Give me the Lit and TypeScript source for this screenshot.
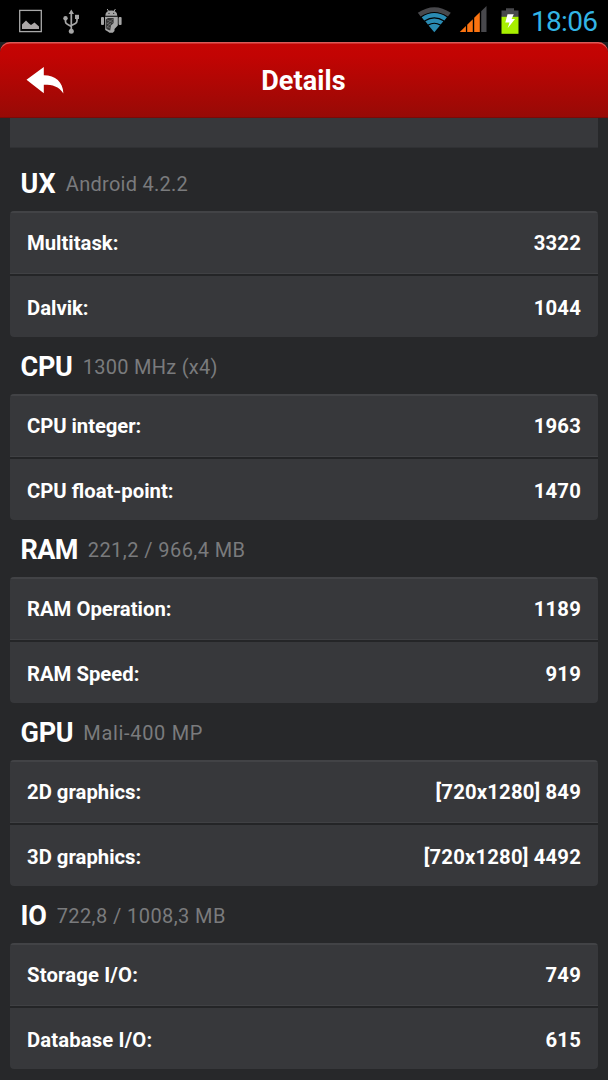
import { LitElement, html, css } from "lit";
import { customElement, property } from "lit/decorators.js";
import { styleMap } from "lit/directives/style-map.js";

interface Entry { label: string; value: string; tracking?: number }
interface Section { name: string; info: string; nameTracking: number; infoTracking: number; entries: Entry[] }

const sections: Section[] = [
  { name: "UX", info: "Android 4.2.2", nameTracking: 0.2, infoTracking: 0.27, entries: [{ label: "Multitask:", value: "3322" }, { label: "Dalvik:", value: "1044" }] },
  { name: "CPU", info: "1300 MHz (x4)", nameTracking: -0.25, infoTracking: 0.28, entries: [{ label: "CPU integer:", value: "1963", tracking: -0.06 }, { label: "CPU float-point:", value: "1470" }] },
  { name: "RAM", info: "221,2 / 966,4 MB", nameTracking: -0.6, infoTracking: 0.43, entries: [{ label: "RAM Operation:", value: "1189" }, { label: "RAM Speed:", value: "919" }] },
  { name: "GPU", info: "Mali-400 MP", nameTracking: -0.25, infoTracking: 0.67, entries: [{ label: "2D graphics:", value: "[720x1280] 849" }, { label: "3D graphics:", value: "[720x1280] 4492" }] },
  { name: "IO", info: "722,8 / 1008,3 MB", nameTracking: -0.2, infoTracking: 0.42, entries: [{ label: "Storage I/O:", value: "749", tracking: 0.15 }, { label: "Database I/O:", value: "615", tracking: 0.13 }] },
];

@customElement("status-bar")
class StatusBar extends LitElement {
  static styles = css`
    :host { display: flex; justify-content: space-between; height: 42px; background: #000; }
    svg { display: block; flex: none; }
    .right { display: flex; }
    .clock { width: 77px; font-size: 28px; line-height: 43px; color: #33b5e5; letter-spacing: -0.7px; white-space: nowrap; }
  `;
  render() {
    return html`
      <svg width="140" height="42" viewBox="0 0 140 42">
        <rect x="19.7" y="10.4" width="21.6" height="21.2" fill="none" stroke="#a9a9a9" stroke-width="1.3" />
        <path d="M22 29V24.5L26 20.5L29 23.5L31 25L34.5 22.5L39 26.5V29Z" fill="#aaa6a6" />
        <g fill="none" stroke="#a6a6a6" stroke-width="1.7">
          <path d="M71.3 12V31M65.5 18.500V21.8Q65.5 23.4 67 24L71.3 26.5M77 18V20.8Q77 22.6 75.4 23.4L71.3 25.5" />
        </g>
        <path d="M71.3 9.5L74 14H68.6Z" fill="#a6a6a6" />
        <circle cx="65.5" cy="18.3" r="2.2" fill="#a6a6a6" />
        <rect x="75" y="14.8" width="4" height="4.200" fill="#a6a6a6" />
        <circle cx="71.3" cy="31.3" r="2.5" fill="#a6a6a6" />
        <g fill="#a6a6a6">
          <path d="M105.3 15.7Q105.6 10.6 111.3 10.6Q117 10.6 117.3 15.7Z" />
          <path d="M107.2 9L108.7 11.5M115.4 9L113.9 11.5" stroke="#a6a6a6" stroke-width="1" />
          <rect x="101" y="17" width="3" height="8" rx="1" />
          <rect x="118.6" y="17" width="3" height="8" rx="1" />
          <path d="M105 16.8H117.8V25.5L114.5 29V31L112.8 32.7H109.5L107.8 31.5L105.2 30Z" />
        </g>
        <path d="M105.8 19.5L108 18H113.6V23L111 25.5L110.2 30.5L107.5 29.5L105.8 28Z" fill="#343434" />
        <path d="M107 20L113 22.500M106.5 23L111 25M106.5 26L110 28M113 19L106.500 24M111 23L106.500 28" stroke="#777" stroke-width=".7" fill="none" />
        <circle cx="109" cy="13.4" r=".6" fill="#222" /><circle cx="113.7" cy="13.4" r=".6" fill="#222" />
      </svg>
      <div class="right">
        <svg width="131" height="42" viewBox="400 0 131 42">
          <path d="M417.8 12.8Q434.3 1.5 450.8 12.8L447.9 16.6Q434.3 7.6 420.7 16.6Z" fill="#48484c" />
          <path d="M421.7 17.2Q434.3 8.8 446.9 17.2L444.4 20.4Q434.3 14 424.2 20.4Z" fill="#2a8bb3" />
          <path d="M425.3 21.3Q434.3 15.5 443.3 21.3L440.7 24.6Q434.3 20.7 427.9 24.6Z" fill="#2a8bb3" />
          <path d="M428.6 25.5Q434.3 22 440 25.5L434.3 32.2Z" fill="#2a8bb3" />
          <path d="M459.8 32L465.9 26V32ZM467.2 24.8L472.8 19.3V32H467.2ZM474.2 17.7L479.8 12.3V32H474.2Z" fill="#fb7310" />
          <path d="M481.2 11.2L486.5 6V32H481.2Z" fill="#48484c" />
          <path d="M501.5 10.5H506V8.2H514V10.5H518.5V17H501.5Z" fill="#48484c" />
          <rect x="501.5" y="16.8" width="17" height="17" fill="#a8f000" />
          <path d="M507.5 14.3H513.8L511.6 19H515L507.6 28.2L509.5 22.5H505.3Z" fill="#fff" />
        </svg>
        <div class="clock">18:06</div>
      </div>
    `;
  }
}

@customElement("title-bar")
class TitleBar extends LitElement {
  static styles = css`
    :host { display: block; height: 76px; background: #1d1f21; }
    .bar {
      box-sizing: border-box; height: 76px; border-radius: 10px 10px 0 0;
      background: linear-gradient(#c50503, #c20403 18%, #970a06);
      box-shadow: inset 0 2px 0 -0.4px #dc5a57, inset 0 -1px 0 #7c0a07;
      display: grid; grid-template-columns: 90px 1fr 90px; align-items: center;
    }
    .title { text-align: center; font-size: 27px; line-height: 32px; font-weight: 700; color: #fff; padding: 2px 1px 0 0; letter-spacing: 0.1px; }
    svg { display: block; }
  `;
  render() {
    return html`<div class="bar">
      <svg width="90" height="76" viewBox="0 42 90 76">
        <path d="M26.5 79.8L43.8 67V75.3C55.5 75.3 63 82 63.4 93.5C58.5 86.3 53 84.8 43.8 84.8V93.2Z" fill="#fff" />
      </svg>
      <div class="title">Details</div>
    </div>`;
  }
}

@customElement("detail-section")
class DetailSection extends LitElement {
  @property({ attribute: false }) section!: Section;
  static styles = css`
    :host { display: block; }
    .head { display: flex; gap: 10px; height: 57px; padding-left: 20.5px; box-sizing: border-box; white-space: nowrap; }
    .name { font-size: 27px; font-weight: 700; color: #fff; line-height: 61px; }
    .info { font-size: 20px; color: #7a7b7d; line-height: 60px; }
    .card { display: grid; grid-template-rows: 63px 61px; gap: 2px; margin: 0 10px; height: 126px; border-radius: 4px; overflow: hidden; background: #242527; }
    .row { display: flex; justify-content: space-between; padding: 0 17px; background: #37383b; color: #fff; font-size: 20.3px; font-weight: 700; line-height: 65px; white-space: nowrap; }
    .row:first-child { box-shadow: inset 0 2px 0 #424346, inset 0 -1px 0 #404144; }
    .value { letter-spacing: 0.18px; }
  `;
  render() {
    const s = this.section;
    return html`
      <div class="head">
        <span class="name" style=${styleMap({ letterSpacing: `${s.nameTracking}px` })}>${s.name}</span>
        <span class="info" style=${styleMap({ letterSpacing: `${s.infoTracking}px` })}>${s.info}</span>
      </div>
      <div class="card">
        ${s.entries.map((e) => html`<div class="row">
          <span style=${styleMap({ letterSpacing: `${e.tracking ?? 0}px` })}>${e.label}</span>
          <span class="value">${e.value}</span>
        </div>`)}
      </div>`;
  }
}

@customElement("app-root")
class AppRoot extends LitElement {
  static styles = css`
    :host { display: block; height: 1080px; overflow: hidden; background: #27282a; font-family: Roboto, "Liberation Sans", sans-serif; }
    .tail { height: 30px; margin: 0 10px 6px; box-sizing: border-box; background: #37383b; border-bottom: 1px solid #303134; }
  `;
  render() {
    return html`
      <status-bar></status-bar>
      <title-bar></title-bar>
      <div class="tail"></div>
      ${sections.map((s) => html`<detail-section .section=${s}></detail-section>`)}
    `;
  }
}
